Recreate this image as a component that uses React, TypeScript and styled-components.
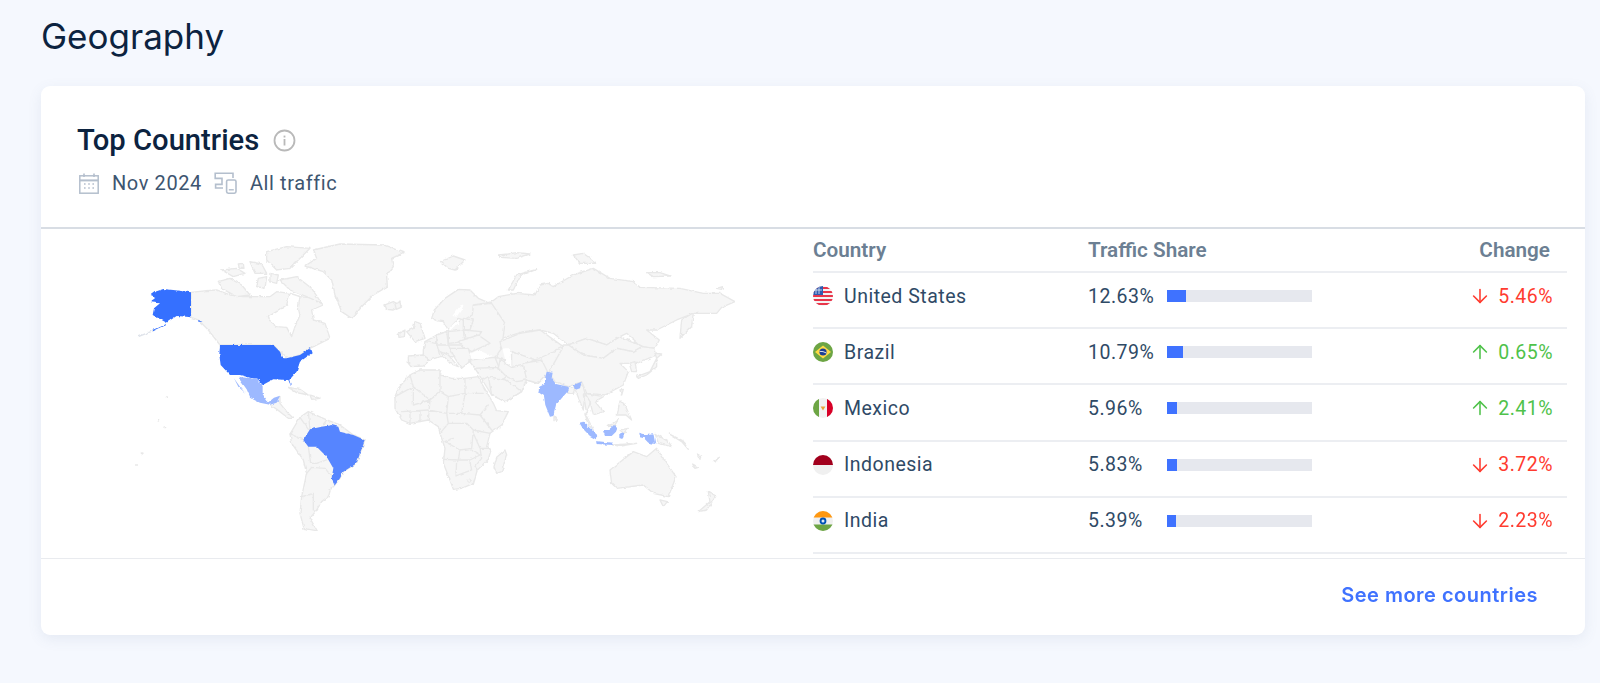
import React from "react";
import styled, { createGlobalStyle } from "styled-components";
import { ArrowDown, ArrowUp } from "lucide-react";

const GlobalStyle = createGlobalStyle`
  html, body { margin: 0; padding: 0; background: #f5f8fe; }
  body { font-family: Roboto, "Liberation Sans", sans-serif; }
`;

type Row = { name: string; code: string; share: string; fill: number; change: string; up: boolean };

const rows: Row[] = [
  { name: "United States", code: "us", share: "12.63%", fill: 19, change: "5.46%", up: false },
  { name: "Brazil", code: "br", share: "10.79%", fill: 16, change: "0.65%", up: true },
  { name: "Mexico", code: "mx", share: "5.96%", fill: 10, change: "2.41%", up: true },
  { name: "Indonesia", code: "id", share: "5.83%", fill: 10, change: "3.72%", up: false },
  { name: "India", code: "in", share: "5.39%", fill: 9, change: "2.23%", up: false },
];

const LAND = "#f6f6f6";
const EDGE = "#e8e8e8";
const DARK = "#3570ff";
const MID = "#5685ff";
const LIGHT = "#9db9ff";

// each sheet of the map is traced at 3x from x,y on the page
const Sheet = ({ x, y, land = [], lines = [], children }: { x: number; y: number; land?: string[]; lines?: string[]; children?: React.ReactNode }) => (
  <g transform={`translate(${x} ${y}) scale(0.3333)`} strokeWidth="4" strokeLinejoin="round" strokeLinecap="round">
    <g fill={LAND} stroke={EDGE}>
      {land.map((d, i) => (
        <path key={i} d={d} />
      ))}
      {lines.map((d, i) => (
        <path key={i} d={d} fill="none" />
      ))}
    </g>
    {children}
  </g>
);

const northAmerica = [
  "M183 157L230 152L260 150L300 165L340 170L420 170L440 155L480 160L510 170L560 175L580 195L545 210L550 240L585 250L600 295L570 310L540 325L510 345L470 355L450 335L430 315L270 315L235 270L205 240L183 232Z",
  "M265 125L300 115L335 135L360 165L320 170L275 145Z",
  "M275 90L320 85L345 100L310 110Z",
  "M325 72L340 70L342 85L328 85Z",
  "M360 65L395 72L410 100L375 100Z",
  "M385 115L410 110L405 145L380 140Z",
  "M410 35L470 20L540 25L520 45L480 85L440 90L410 60Z",
  "M450 120L500 110L545 145L575 190L530 170L480 150Z",
  "M420 100L445 105L440 130L420 125Z",
];

const westernLand = [
  "M615 108L650 85L640 60L720 42L850 45L912 68L875 85L880 110L860 135L862 170L820 195L790 225L755 265L725 245L705 195L695 150L670 125Z",
  "M855 225L880 215L905 228L880 240L860 238Z",
  "M565 472L600 478L625 495L590 488Z",
  "M630 495L660 505L635 508Z",
  "M505 520L540 500L540 520L560 545L580 565L565 565L540 545Z",
  "M570 612L600 562L625 545L680 570L720 585L760 615L796 630L780 670L770 700L730 725L720 745L705 765L690 780L685 800L665 815L650 840L630 865L652 903L612 895L600 850L605 800L620 730L610 690L575 640Z",
];

const westernLines = [
  "M625 545L630 598M610 630L570 612M625 650L632 700L650 700L680 690M620 730L635 712L675 715L700 745M605 800L640 790L640 840M600 562L625 598M680 570L665 590",
];

const africa = [
  "M15 80L25 55L50 25L65 12L90 0L150 0L150 15L185 25L225 25L265 20L275 40L310 100L320 122L355 125L335 165L300 190L290 230L303 240L295 268L262 300L250 340L215 355L190 358L180 330L160 280L165 235L150 190L145 170L115 150L60 160L35 150L15 115Z",
  "M312 290L320 262L345 240L350 255L335 305L320 310Z",
];

const africaLines = [
  "M15 80L70 50L70 105M60 15L70 50L120 90L150 65L150 15M150 65L175 80L225 70L225 25M225 70L280 70M120 90L115 150M175 80L170 130L115 120M70 105L120 90M215 130L225 70M170 130L215 130L270 135L295 105",
  "M270 135L305 180M170 130L175 160L150 190M175 160L230 160L250 180L245 235L210 240L165 215M190 205L165 215M250 180L300 190M250 190L270 235L300 235M210 240L205 270L160 268M245 240L270 255L240 270L205 270M200 272L198 318M240 275L245 300L198 318M270 235L275 265L255 290L262 300M35 125L115 120M60 125L60 160M90 122L90 155",
];

const europe = [
  "M300 232L320 185L505 200L460 280L430 310L395 300L380 335L330 365L290 345L262 300Z",
  "M85 225L90 185L125 165L155 155L205 115L235 75L290 70L330 130L320 205L300 232L220 240L190 230L135 230Z",
  "M110 115L118 90L150 55L190 28L225 30L250 55L280 68L235 75L232 105L205 120L190 115L160 150L145 125L125 122Z",
  "M40 228L85 225L105 240L85 258L48 260L40 250Z",
  "M85 225L105 240L135 230L125 190L90 185L85 210Z",
  "M125 165L155 155L160 195L125 195Z",
  "M160 155L205 150L210 185L160 190Z",
  "M205 115L235 120L225 150L205 150Z",
  "M205 150L260 155L250 170L210 175Z",
  "M190 185L250 165L285 190L230 215L205 200Z",
  "M135 215L160 225L190 260L165 250Z",
  "M165 205L220 205L230 240L200 265L180 235Z",
  "M220 240L300 232L315 262L240 265Z",
  "M35 155L55 145L60 125L75 130L90 175L60 185Z",
  "M10 160L30 150L28 170L12 172Z",
  "M0 72L15 66L18 82L4 88Z",
  "M160 195L200 195L205 205L165 205Z",
  "M300 232L330 240L312 262Z",
  // middle east, iran and central asia
  "M240 265L315 262L335 290L320 300L280 290L262 300Z",
  "M280 290L335 300L380 335L330 365L290 345Z",
  "M315 240L350 262L385 250L395 300L365 305L335 290L310 265Z",
  "M315 185L375 160L435 150L505 200L455 225L420 240L350 215L320 205Z",
  "M350 215L420 240L390 255L350 262Z",
  "M385 250L440 240L460 280L430 310L395 300Z",
];

const russia = [
  "M215 215L235 200L290 190L345 195L360 165L385 160L400 170L460 135L520 115L570 145L640 155L660 172L780 175L850 190L900 190L945 215L905 232L890 250L820 250L770 270L710 300L680 300L718 330L705 355L665 350L620 310L600 320L560 345L500 325L445 345L400 310L360 300L310 305L245 325L240 350L215 345L170 330L150 320L155 260L175 225Z",
  "M445 345L500 325L560 345L600 320L670 350L640 365L590 355L550 385L490 375Z",
  "M355 385L430 345L445 345L490 375L550 385L590 355L640 365L665 350L705 355L710 375L650 400L600 400L625 425L610 465L555 495L500 490L485 455L445 470L405 455L385 425Z",
  "M62 95L100 78L135 90L105 120L85 115Z",
  "M235 75L265 72L290 68L330 72L290 85L240 82Z",
  "M460 75L490 70L530 100L480 100Z",
  "M680 128L720 128L750 138L700 140Z",
  "M265 180L290 135L350 118L300 138L280 180Z",
  "M780 325L785 270L820 248L815 290Z",
  "M890 175L908 170L905 178Z",
  "M570 720L640 665L680 680L710 655L740 700L768 740L745 800L700 790L670 765L590 775L575 760Z",
  "M720 810L742 815L730 830Z",
  "M835 845L870 815L865 785L888 798L860 840Z",
];

const southEast = [
  "M100 165L128 165L135 190L130 240L110 190Z",
  "M130 195L160 195L150 220L140 250L135 220Z",
  "M135 190L190 200L165 215L190 245L160 255L150 215Z",
  "M135 250L160 300L145 285Z",
  "M80 170L105 175L100 190L85 190Z",
  "M290 140L330 125L350 85L350 110L320 135L295 145Z",
  "M345 70L365 72L350 85Z",
  "M268 100L285 95L290 125L275 125Z",
  "M240 180L250 178L245 195Z",
  "M240 210L255 225L275 270L258 255L232 255Z",
  "M205 290L235 268L225 285Z",
  "M240 300L265 295L250 310Z",
  "M345 310L385 335L395 350L355 340Z",
  "M388 312L425 330L445 358L425 335Z",
  "M218 345L290 340L240 348Z",
  "M472 372L482 378L480 388Z",
  "M522 392L538 382L528 396Z",
  "M458 402L475 412L465 415Z",
  "M42 258L52 270L42 272Z",
];

const dots = [
  [200, 502], [175, 572], [125, 670], [108, 705], [193, 592],
];

const Map = () => (
  <svg viewBox="41 229 772 327" width="772" height="327">
    <filter id="coast" x="0" y="0" width="100%" height="100%">
      <feTurbulence type="fractalNoise" baseFrequency="0.22" numOctaves="2" seed="4" />
      <feDisplacementMap in="SourceGraphic" scale="3" xChannelSelector="R" yChannelSelector="G" />
      <feGaussianBlur stdDeviation="0.35" />
    </filter>
    <g filter="url(#coast)">
      <Sheet x={130} y={240} land={northAmerica}>
        <path
          d="M415 230L440 215L470 195L480 160L510 170L505 205L510 225L495 260L485 290L470 262L440 260L420 245Z"
          fill="#fff"
          stroke={EDGE}
          strokeWidth="4"
        />
        <path d="M25 290L70 272" stroke="#dfe3ea" strokeWidth="4" fill="none" />
        <path d="M70 272L108 254" stroke={DARK} strokeWidth="3" fill="none" />
        <path
          fill={DARK}
          d="M183 157L130 150L100 147L75 155L62 165L78 172L60 187L90 190L72 205L68 225L95 240L110 248L125 238L140 228L183 232ZM205 240L218 245L205 245ZM270 315L430 315L450 335L458 355L470 355L510 345L540 325L545 340L510 365L500 395L478 420L485 443L475 420L430 418L398 435L385 420L330 405L300 405L272 375L268 345Z"
        />
      </Sheet>
      <Sheet x={100} y={230} land={westernLand} lines={westernLines}>
        <g fill={EDGE}>
          {dots.map(([cx, cy]) => (
            <circle key={cx} cx={cx} cy={cy} r="3" />
          ))}
        </g>
        <path
          fill={LIGHT}
          d="M415 440L470 448L488 468L488 492L505 517L522 503L540 497L530 518L510 524L480 518L452 505L440 478L420 450ZM402 445L420 470L435 488L415 470Z"
        />
        <path
          fill={MID}
          d="M610 630L630 598L665 590L695 585L715 590L720 605L760 615L795 630L780 670L770 700L730 725L720 745L705 765L695 745L700 715L680 680L650 650L625 650Z"
        />
      </Sheet>
      <Sheet x={390} y={370} land={africa} lines={africaLines}>
        <circle cx="238" cy="332" r="5" fill={LAND} stroke={EDGE} strokeWidth="3" />
      </Sheet>
      <Sheet x={420} y={230} land={russia} />
      <Sheet x={395} y={280} land={europe}>
        <path d="M225 222L250 210L290 228L260 238L228 236Z" fill="#fff" />
        <path d="M322 205L345 205L350 262L332 245Z" fill="#fff" />
        <path d="M172 108L200 72L206 78L185 110ZM158 148L188 120L193 128L165 150Z" fill="#fff" />
      </Sheet>
      <Sheet x={540} y={330} land={southEast}>
        <path
          fill={LIGHT}
          d="M100 165L125 155L120 175L105 180ZM118 278L130 275L150 295L175 318L168 328L150 318L130 298ZM168 333L195 336L218 338L218 345L170 342ZM188 300L205 300L222 285L232 295L228 305L215 318L195 318ZM238 308L252 313L247 327L238 324ZM298 308L312 312L322 312L340 310L346 342L325 338L312 325L300 322Z"
        />
      </Sheet>
      <Sheet x={420} y={230}>
        <path
          fill={LIGHT}
          d="M380 425L398 428L395 445L408 462L445 470L447 480L425 505L408 525L400 558L390 560L376 525L372 498L355 487L358 470L375 462L375 445Z"
        />
      </Sheet>
    </g>
  </svg>
);

const Clip = ({ id, children }: { id: string; children: React.ReactNode }) => (
  <svg width="20" height="20" viewBox="0 0 20 20">
    <clipPath id={id}>
      <circle cx="10" cy="10" r="10" />
    </clipPath>
    <g clipPath={`url(#${id})`}>{children}</g>
  </svg>
);

const Flag = ({ code }: { code: string }) => {
  if (code === "us")
    return (
      <Clip id="us">
        <rect width="20" height="20" fill="#f3f3f3" />
        {[2, 6, 10, 14, 18].map((y) => (
          <rect key={y} y={y - 1} width="20" height="2" fill="#e8364a" />
        ))}
        <rect width="10" height="9" fill="#2f5cb0" />
        <path d="M3 1v7M6 1v7M1 4h8" stroke="#e6ecf8" strokeWidth="0.8" />
      </Clip>
    );
  if (code === "br")
    return (
      <Clip id="br">
        <rect width="20" height="20" fill="#6da544" />
        <path d="M10 3.5L18 10L10 16.5L2 10Z" fill="#ffda44" />
        <circle cx="10" cy="10" r="3.6" fill="#1c3f94" />
        <path d="M6.6 9.4Q10 9 13.4 11" stroke="#f0f0f0" strokeWidth="0.9" fill="none" />
      </Clip>
    );
  if (code === "mx")
    return (
      <Clip id="mx">
        <rect width="20" height="20" fill="#f2f2f2" />
        <rect width="6" height="20" fill="#6da544" />
        <rect x="14" width="6" height="20" fill="#d80027" />
        <path d="M7.6 8.4h4.8L10 12.6Z" fill="#e9a23b" />
      </Clip>
    );
  if (code === "id")
    return (
      <Clip id="id">
        <rect width="20" height="20" fill="#f0f0f0" />
        <rect width="20" height="10" fill="#a2001d" />
      </Clip>
    );
  return (
    <Clip id="in">
      <rect width="20" height="20" fill="#f0f0f0" />
      <rect width="20" height="6.5" fill="#ff9811" />
      <rect y="13.5" width="20" height="6.5" fill="#6da544" />
      <circle cx="10" cy="10" r="3.4" fill="#0052b4" />
      <circle cx="10" cy="10" r="1.5" fill="#dfe9f7" />
    </Clip>
  );
};

const InfoIcon = () => (
  <svg width="23" height="23" viewBox="0 0 23 23" fill="none">
    <circle cx="11.5" cy="11.5" r="10" stroke="#b9b9b9" strokeWidth="1.8" />
    <rect x="10.6" y="10" width="1.8" height="6.5" fill="#b9b9b9" />
    <rect x="10.6" y="6.6" width="1.8" height="1.9" fill="#b9b9b9" />
  </svg>
);

const CalendarIcon = () => (
  <svg width="20" height="21" viewBox="0 0 20 21" fill="none">
    <rect x="0.8" y="2.8" width="18.4" height="17.4" stroke="#b4bfcd" strokeWidth="1.5" />
    <path d="M1 7.4h18" stroke="#b4bfcd" strokeWidth="2" />
    <path d="M5 0.5v3.6M15 0.5v3.6" stroke="#b4bfcd" strokeWidth="1.6" />
    <path d="M5 11h1.6M9.2 11h1.6M13.4 11h1.6M5 15h1.6M9.2 15h1.6M13.4 15h1.6" stroke="#b4bfcd" strokeWidth="1.4" />
  </svg>
);

const DevicesIcon = () => (
  <svg width="23" height="22" viewBox="0 0 23 22" fill="none">
    <path d="M19 6V1.2H1.2V6.4H8V12.4H1.6V16H9" stroke="#b4bfcd" strokeWidth="1.6" />
    <rect x="12.6" y="8" width="9.4" height="13.2" rx="1.6" stroke="#b4bfcd" strokeWidth="1.6" />
    <path d="M14.8 17.8h5" stroke="#b4bfcd" strokeWidth="1.4" />
  </svg>
);

export default function App() {
  return (
    <>
      <GlobalStyle />
      <Page>
        <Heading>Geography</Heading>
        <Card>
          <CardHeader>
            <TitleRow>
              <Title>Top Countries</Title>
              <InfoIcon />
            </TitleRow>
            <Meta>
              <CalendarIcon />
              <MetaText>Nov 2024</MetaText>
              <DevicesIcon />
              <MetaText>All traffic</MetaText>
            </Meta>
          </CardHeader>
          <CardBody>
            <MapPane>
              <Map />
            </MapPane>
            <Table>
              <HeadRow>
                <span>Country</span>
                <span>Traffic Share</span>
                <HeadEnd>Change</HeadEnd>
              </HeadRow>
              {rows.map((r) => (
                <DataRow key={r.code}>
                  <CountryCell>
                    <Flag code={r.code} />
                    {r.name}
                  </CountryCell>
                  <ShareCell>
                    <Pct>{r.share}</Pct>
                    <Bar>
                      <BarFill style={{ width: r.fill }} />
                    </Bar>
                  </ShareCell>
                  <ChangeCell $up={r.up}>
                    {r.up ? <ArrowUp size={22} strokeWidth={1.7} /> : <ArrowDown size={22} strokeWidth={1.7} />}
                    <span>{r.change}</span>
                  </ChangeCell>
                </DataRow>
              ))}
            </Table>
          </CardBody>
          <CardFooter>
            <MoreLink>See more countries</MoreLink>
          </CardFooter>
        </Card>
      </Page>
    </>
  );
}

const Page = styled.div`
  width: 1600px;
  height: 683px;
  padding: 0 15px 0 41px;
  box-sizing: border-box;
  overflow: hidden;
`;

const Heading = styled.h1`
  margin: 0;
  height: 86px;
  padding-top: 14px;
  box-sizing: border-box;
  font-family: Inter, sans-serif;
  font-size: 35px;
  line-height: 44px;
  font-weight: 400;
  color: #0c2340;
`;

const Card = styled.section`
  background: #fff;
  border-radius: 9px;
  height: 549px;
  box-shadow: 0 4px 14px rgba(90, 110, 150, 0.1);
  display: flex;
  flex-direction: column;
`;

const CardHeader = styled.header`
  height: 143px;
  box-sizing: border-box;
  padding: 36px 36px 0;
  border-bottom: 2px solid #d8dde4;
`;

const TitleRow = styled.div`
  display: flex;
  align-items: center;
  gap: 14px;
`;

const Title = styled.h2`
  margin: 0;
  font-size: 29.2px;
  line-height: 36px;
  font-weight: 500;
  color: #0c2340;
`;

const Meta = styled.div`
  display: flex;
  align-items: center;
  margin: 13px 0 0 2px;
  color: #3d5570;
`;

const MetaText = styled.span`
  font-size: 20px;
  line-height: 24px;
  letter-spacing: 0.6px;
  margin: 0 12px 0 13px;
`;

const CardBody = styled.div`
  display: flex;
  height: 329px;
  border-bottom: 1px solid #e9ebef;
`;

const MapPane = styled.div`
  width: 772px;
  flex: none;
  display: flex;
`;

const Table = styled.div`
  width: 754px;
  flex: none;
`;

const gridColumns = "275px 1fr auto";

const HeadRow = styled.div`
  display: grid;
  grid-template-columns: ${gridColumns};
  align-items: center;
  height: 44px;
  padding-right: 17px;
  border-bottom: 2px solid #eceef2;
  box-sizing: border-box;
  font-size: 20.7px;
  font-weight: 600;
  color: #6c7f93;
`;

const HeadEnd = styled.span`
  text-align: right;
`;

const DataRow = styled.div`
  display: grid;
  grid-template-columns: ${gridColumns};
  align-items: center;
  height: 56.2px;
  padding: 0 14px 8px 0;
  border-bottom: 2px solid #eceef2;
  box-sizing: border-box;
  font-size: 19.5px;
  color: #2f4a66;
`;

const CountryCell = styled.div`
  display: flex;
  align-items: center;
  gap: 11px;
  letter-spacing: 0.5px;
`;

const ShareCell = styled.div`
  display: flex;
  align-items: center;
`;

const Pct = styled.span`
  width: 79px;
  letter-spacing: 0.5px;
`;

const Bar = styled.div`
  width: 145px;
  height: 12px;
  background: #e6e8ee;
`;

const BarFill = styled.div`
  height: 100%;
  background: #3f72ff;
`;

const ChangeCell = styled.div<{ $up: boolean }>`
  display: flex;
  align-items: center;
  gap: 7px;
  letter-spacing: 0.5px;
  color: ${(p) => (p.$up ? "#4fc24a" : "#ff3b2f")};
`;

const CardFooter = styled.footer`
  flex: 1;
  display: flex;
  align-items: center;
  justify-content: flex-end;
  padding: 0 47px 4px 0;
`;

const MoreLink = styled.a`
  font-family: Inter, sans-serif;
  font-size: 20px;
  font-weight: 600;
  color: #3f72ff;
  letter-spacing: 0.5px;
`;
